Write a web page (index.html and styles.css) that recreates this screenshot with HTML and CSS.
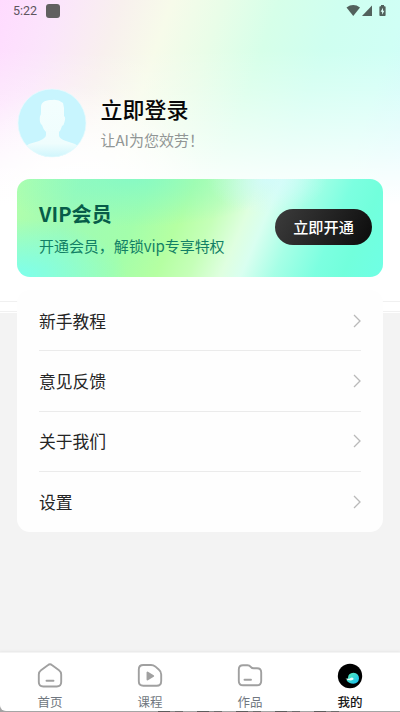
FILE: index.html
```html
<!DOCTYPE html>
<html lang="zh-CN">
<head>
<meta charset="utf-8">
<title>我的</title>
<link rel="stylesheet" href="styles.css">
</head>
<body>
<div class="screen">
  <main class="content">
    <header class="status">
      <span class="time">5:22</span>
      <i class="app-dot"></i>
      <svg class="signals" width="42" height="14" viewBox="0 0 42 14" fill="#52615c">
        <path d="M0.5 3.5Q7.2-1.4 14 3.5L7.25 12Z"/>
        <path d="M26 1.5V12H16Z"/>
        <path d="M35 1h3v1.2h.8q.8 0 .8.8v8.2q0 .8-.8.8h-4.600q-.8 0-.8-.8V3q0-.8.8-.8H35Z"/>
        <path d="M37 3.7 34.6 7.7h1.500v3L38.400 6.800h-1.400Z" fill="#dffff8"/>
      </svg>
    </header>
    <section class="profile">
      <svg class="avatar" width="70" height="70" viewBox="0 0 70 70">
        <defs>
          <clipPath id="face"><circle cx="35" cy="35" r="34"/></clipPath>
          <linearGradient id="person" x1="0" y1="0" x2="0" y2="1">
            <stop offset="0" stop-color="#f3fefe"/><stop offset=".75" stop-color="#effdfd"/><stop offset="1" stop-color="#cdf5fc"/>
          </linearGradient>
        </defs>
        <circle cx="35" cy="35" r="34" fill="#c8f5fe"/>
        <path clip-path="url(#face)" fill="url(#person)" d="M24 19C24 13 30 12 35 12Q41 11 46 15L47 20V28Q49 29 47.500 34Q47 37 45 38Q44 42 42 44V48Q43 51 49 53L58 56Q63 58 64 70H6Q7 58 12 56L22 53Q29 50 29 47V44Q26 41 25 37Q22 35 23 28Q24 27 24 24Z"/>
        <circle cx="35" cy="35" r="34" fill="none" stroke="#e7fbfd" stroke-width=".7"/>
      </svg>
      <div class="who">
        <h1>立即登录</h1>
        <p>让AI为您效劳！</p>
      </div>
    </section>
    <section class="vip">
      <div class="vip-text">
        <h2>VIP会员</h2>
        <p>开通会员，解锁vip专享特权</p>
      </div>
      <button class="open">立即开通</button>
    </section>
    <nav class="menu">
      <a class="row"><span>新手教程</span><svg class="chevron" viewBox="0 0 8 14"><path d="M1 1 7 7 1 13"/></svg></a>
      <a class="row"><span>意见反馈</span><svg class="chevron" viewBox="0 0 8 14"><path d="M1 1 7 7 1 13"/></svg></a>
      <a class="row"><span>关于我们</span><svg class="chevron" viewBox="0 0 8 14"><path d="M1 1 7 7 1 13"/></svg></a>
      <a class="row"><span>设置</span><svg class="chevron" viewBox="0 0 8 14"><path d="M1 1 7 7 1 13"/></svg></a>
    </nav>
  </main>
  <footer class="tabs">
    <a class="tab"><svg class="icon" viewBox="0 0 26 26"><path d="M10.800 2.200Q13 .5 15.200 2.200L22 7.200Q24.200 8.800 24.200 11.500V19Q24.200 23.500 19.700 23.500H6.300Q1.800 23.500 1.800 19V11.500Q1.800 8.800 4 7.200ZM9.500 17.800h7"/></svg><span>首页</span></a>
    <a class="tab"><svg class="icon" viewBox="0 0 26 26"><path d="M6.300 2H14Q16.500 2 18.200 3.400L22 6.700Q24.200 8.500 24.200 11.500V18Q24.200 22.800 19.700 22.800H6.300Q1.800 22.800 1.800 18.300V6.500Q1.800 2 6.300 2Z"/><path class="solid" d="M10.500 9.500v7l5.700-3.500Z"/></svg><span>课程</span></a>
    <a class="tab"><svg class="icon" viewBox="0 0 26 26"><path d="M6 2.300h4.500q2 0 3.200 1.500t3 1.500H20q4.200 0 4.200 4.200V18q0 4.300-4.300 4.300H6.100Q1.800 22.300 1.800 18V6.500Q1.800 2.300 6 2.300ZM7.500 16.800H14"/></svg><span>作品</span></a>
    <a class="tab active"><svg class="icon-me" viewBox="0 0 26 26">
      <defs><linearGradient id="wave" x1="0" y1="0" x2="1" y2="1"><stop offset="0" stop-color="#5cefb4"/><stop offset="1" stop-color="#12baf3"/></linearGradient></defs>
      <circle cx="13" cy="13" r="12.200" fill="#000"/>
      <path fill="url(#wave)" d="M11 15Q11 10 16.500 9.800Q22 10.500 22 15.500Q21.500 20.500 16.500 20.800Q11.500 20.800 9.500 17Z"/>
      <path fill="#e8fffa" d="M8.500 14.900Q11 16.600 13.500 14.900Q15.500 14 16.800 16Q15.500 17.800 12.500 17.300Q9.500 17 8.500 14.900Z"/>
    </svg><span>我的</span></a>
  </footer>
</div>
</body>
</html>
```
FILE: styles.css
```css
* { box-sizing: border-box; }

body {
  margin: 0;
  background: #a2a2a2;
  font-family: "Noto Sans CJK SC", sans-serif;
}

h1, h2, p { margin: 0; }

.screen {
  display: flex;
  flex-direction: column;
  height: 712px;
  overflow: hidden;
  background:
    repeating-linear-gradient(90deg, #555 0 12px, #888 12px 17px, #666 17px 25px, #a2a2a2 25px 39px) 158px 711px / 190px 1px no-repeat,
    #a2a2a2;
}

.content {
  flex: 1;
  padding: 0 17px;
  background:
    linear-gradient(#f0f0f0, #f0f0f0) 0 301px / 100% 1px no-repeat,
    linear-gradient(#f1f1f1, #f1f1f1) 0 311px / 100% 1px no-repeat,
    linear-gradient(rgba(255,255,255,0) 50px, rgba(255,255,255,.22) 90px, rgba(255,255,255,.55) 140px, rgba(255,255,255,.78) 172px, #fff 205px) 0 0 / 100% 313px no-repeat,
    radial-gradient(ellipse 130px 110px at 75px 195px, #fff 20%, rgba(255,255,255,0)) 0 0 / 100% 313px no-repeat,
    linear-gradient(109deg, #ffdbff 0, #fbe5fb 12%, #f8f0ee 24%, #f7fbea 34%, #e9fde8 44%, #d6ffe9 55%, #cffff0 67%, #d0fff5 80%, #d2f8ff 96%) 0 0 / 100% 313px no-repeat,
    #f3f3f3;
}

.status {
  display: flex;
  align-items: center;
  height: 22px;
  margin: 0 -5px 0 -4px;
  color: #5d555e;
}

.time {
  width: 33px;
  font-family: Roboto, sans-serif;
  font-size: 12.500px;
  line-height: 22px;
}

.app-dot {
  width: 14px;
  height: 14px;
  border-radius: 3px;
  background: #616060;
}

.signals { margin-left: auto; }

.profile {
  display: flex;
  height: 157px;
  padding-top: 66px;
}

.avatar { margin-right: 13.500px; }

.who { padding-top: 3px; }

.who h1 {
  font-size: 22px;
  line-height: 35px;
  font-weight: 500;
  color: #080808;
}

.who p {
  margin-top: 3px;
  font-size: 15px;
  line-height: 22px;
  color: #919695;
}

.vip {
  display: flex;
  justify-content: space-between;
  height: 98px;
  padding: 19px 11px 0 22px;
  border-radius: 13px;
  background:
    radial-gradient(ellipse 60px 35px at 250px 0, rgba(210,250,255,.8), rgba(210,250,255,0)),
    radial-gradient(ellipse 110px 58px at 0 100%, #80ffe8 8%, rgba(128,255,232,0)),
    radial-gradient(ellipse 150px 48px at 115px 0, rgba(125,248,205,.7), rgba(125,248,205,0)),
    linear-gradient(113deg, #b4ffaa 0, #9ffbb5 16%, #a3feab 33%, #b5ffa2 44%, #c5ffb8 52%, #dfffe0 60%, #d9fff0 65%, #a6ffe6 73%, #7cffe0 83%, #72ffdc 90%, #6fffe5 100%);
}

.vip h2 {
  font-size: 20px;
  line-height: 31px;
  font-weight: 700;
  letter-spacing: .1px;
  color: #075c49;
}

.vip p {
  margin-top: 5px;
  font-size: 15px;
  line-height: 23px;
  letter-spacing: -.05px;
  color: #128065;
}

.open {
  width: 97px;
  height: 36px;
  margin-top: 11px;
  padding: 0 0 2px;
  border: 0;
  border-radius: 18px;
  background: linear-gradient(120deg, #3c3c3c, #242424 50%, #0b0b0b);
  color: #fff;
  font: 500 15.200px/34px "Noto Sans CJK SC", sans-serif;
}

.menu {
  height: 242px;
  margin-top: 13px;
  padding: 1px 22px 0;
  border-radius: 13px;
  background: #fefefe;
}

.row {
  display: flex;
  align-items: center;
  justify-content: space-between;
  height: 60.300px;
  border-bottom: 1px solid #ebebeb;
  font-size: 16.800px;
  line-height: 24px;
  color: #252525;
}

.row:last-child { border: 0; }

.chevron {
  width: 8px;
  height: 14px;
  fill: none;
  stroke: #b9b9b9;
  stroke-width: 1.300;
}

.tabs {
  display: flex;
  height: 59px;
  margin-bottom: 1px;
  border-top: 1px solid #f4f4f4;
  border-bottom-left-radius: 6px;
  background: #fff;
  box-shadow: 0 -1px 2px #e8e8e8;
}

.tab {
  display: flex;
  flex: 1;
  flex-direction: column;
  align-items: center;
  padding-top: 10px;
  font-size: 12.500px;
  line-height: 18px;
  color: #707780;
}

.active { color: #171717; font-weight: 500; }

.icon, .icon-me { width: 26px; height: 26px; margin-bottom: 4px; }

.icon {
  fill: none;
  stroke: #a0a0a0;
  stroke-width: 1.900;
  stroke-linecap: round;
  stroke-linejoin: round;
}

.solid { fill: #a0a0a0; }
```
